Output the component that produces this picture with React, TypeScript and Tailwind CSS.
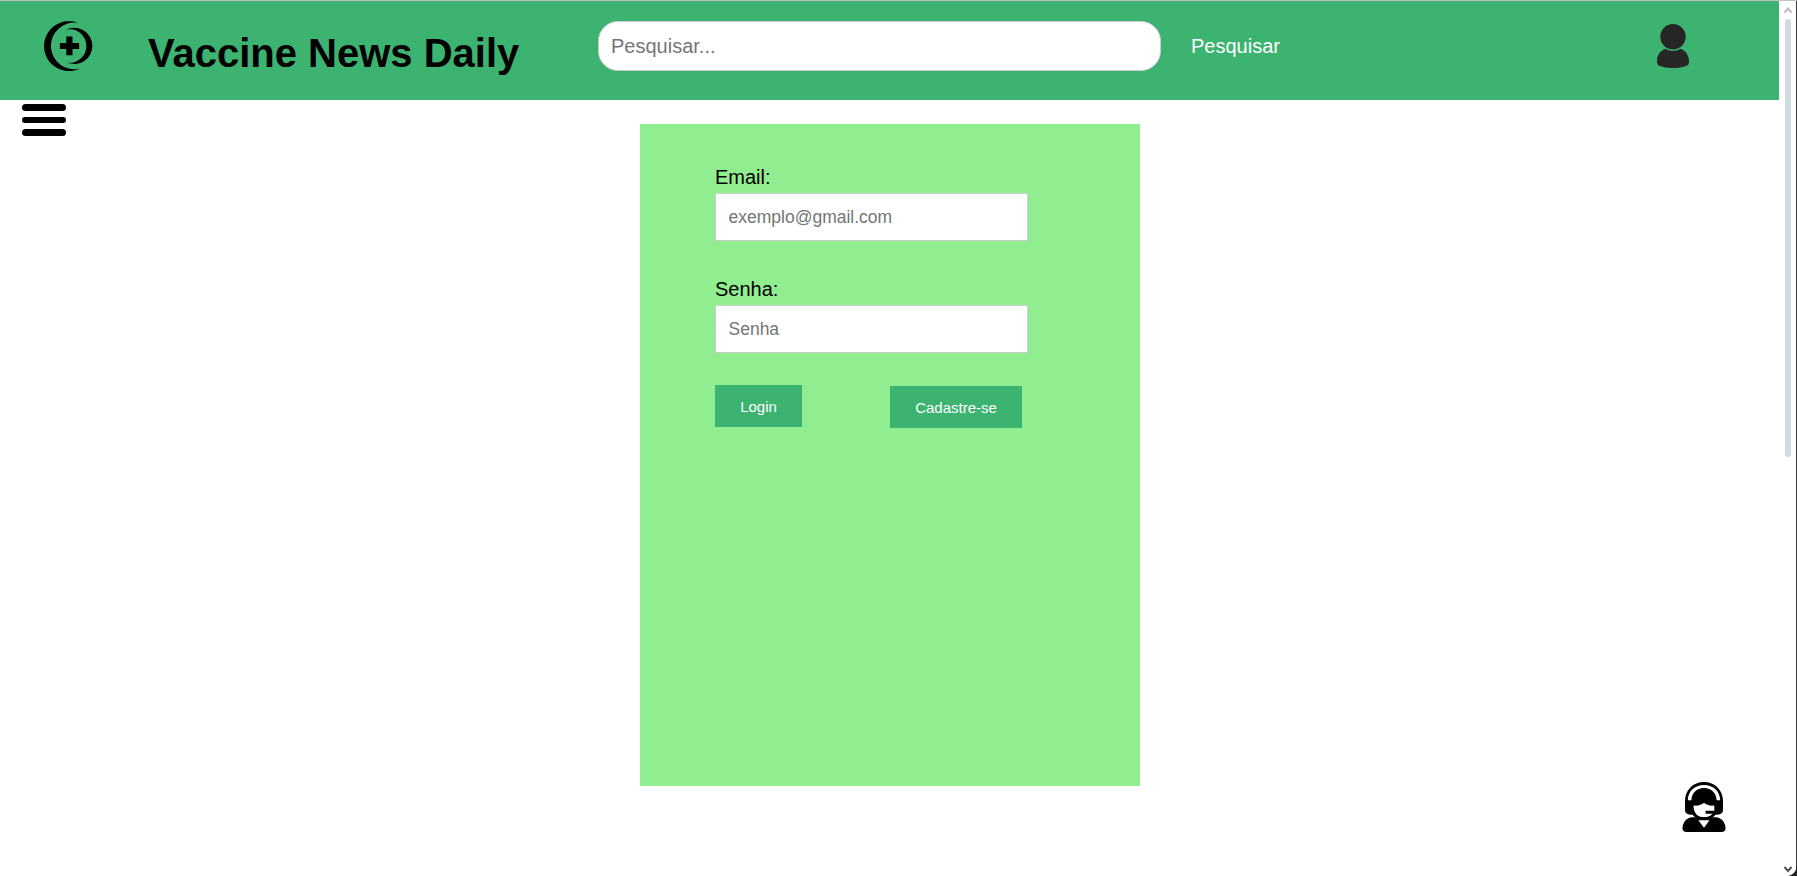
import React from "react";

function LogoIcon() {
  return (
    <svg className="h-[50px] w-[49px] shrink-0" viewBox="0 0 49 50" aria-label="Vaccine News Daily">
      <path d="M34 1.800A25 25 0 1 0 36 47.600A23.400 23.400 0 1 1 34 1.800Z" />
      <path d="M22 8.600A18.200 18.200 0 1 1 23 41.600A16.800 16.800 0 1 0 22 8.600Z" />
      <path d="M22.300 15.500h6.200v6.400h6.600v6.200h-6.600v6.200h-6.200v-6.200H15.900v-6.200h6.400Z" />
    </svg>
  );
}

function UserIcon() {
  return (
    <svg className="h-[44px] w-[32px] shrink-0 fill-[#262626]" viewBox="0 0 32 44">
      <ellipse cx="16" cy="12.700" rx="12.700" ry="12.700" />
      <path d="M8.500 24.800C13 27.800 19 27.800 23.500 24.800C28.800 26.800 32 31.500 32 37.500C32 38.500 31.900 39.500 31.500 40.200C29.500 42.800 23 44 16 44S2.500 42.800 .5 40.200C.1 39.500 0 38.500 0 37.500C0 31.500 3.200 26.800 8.500 24.800Z" />
    </svg>
  );
}

function SupportIcon() {
  return (
    <svg className="h-[50px] w-[44px]" viewBox="0 0 44 50">
      <path d="M3 19C3 8 11 0 22 0s19 8 19 19v9c0 3.500-3 4.700-7.500 4.700C31 36 27 37.500 22 37.500S13 36 10.500 32.700C6 32.700 3 31.500 3 28Z" />
      <path d="M5.800 18.200C6 9.300 12.500 2.900 22 2.900s16 6.400 16.200 15.300h-3.600C34.300 11 29.500 6 22 6S9.700 11 9.400 18.200Z" fill="white" />
      <path d="M11.500 23.500C16 24 19.500 23 22 20.800C24.500 23 28 24 32.300 23.500V28.800H23.600v2.900h6.900C28.700 34 26 35.200 22 35.200C15.500 35.200 11.500 31 11.500 23.500Z" fill="white" />
      <path d="M10 35.300h24c5 0 9.500 5 9.500 11c0 2.500-1.500 3.700-4 3.700h-35C2 50 .5 48.800 .5 46.300C.5 40.300 5 35.300 10 35.300Z" />
      <path d="M16.300 38.300h11.200L22 45.800Z" fill="white" />
    </svg>
  );
}

function Header() {
  return (
    <header className="flex h-[99px] shrink-0 items-start bg-[#3cb371] pt-5">
      <div className="ml-[43.5px]">
        <LogoIcon />
      </div>
      <h1 className="mt-[9px] ml-[55.5px] w-[450px] text-[40px] leading-[46px] font-bold whitespace-nowrap">Vaccine News Daily</h1>
      <input
        className="h-[50px] w-[563px] rounded-[20px] border border-[#ccc] bg-white px-[12px] text-[20px] placeholder-[#757575] outline-none"
        placeholder="Pesquisar..."
      />
      <button className="ml-[30px] h-[50px] text-[20px] text-white">Pesquisar</button>
      <div className="mt-[3px] mr-[90px] ml-auto">
        <UserIcon />
      </div>
    </header>
  );
}

function MenuButton() {
  return (
    <button className="mt-1 ml-[22px] flex w-11 flex-col gap-[6px]" aria-label="Menu">
      <span className="h-[6.5px] w-full rounded-full bg-black" />
      <span className="h-[6.5px] w-full rounded-full bg-black" />
      <span className="h-[6.5px] w-full rounded-full bg-black" />
    </button>
  );
}

function Field({ label, placeholder, type }: { label: string; placeholder: string; type: string }) {
  return (
    <label className="flex flex-col text-[20px] leading-[23px]">
      {label}
      <input
        type={type}
        placeholder={placeholder}
        className="mt-[4px] h-[48px] w-[313px] border border-[#ccc] bg-white px-[12.5px] text-[17.5px] placeholder-[#757575] outline-none"
      />
    </label>
  );
}

function LoginForm() {
  return (
    <form className="h-[662px] w-[500px] bg-[#90ee90] pt-[42px] pl-[75px]">
      <div className="flex flex-col gap-[37px]">
        <Field label="Email:" placeholder="exemplo@gmail.com" type="email" />
        <Field label="Senha:" placeholder="Senha" type="password" />
      </div>
      <div className="mt-[32px] flex items-start gap-[88px]">
        <button type="button" className="h-[42px] w-[87px] bg-[#3cb371] pt-[2px] text-[15px] text-white">Login</button>
        <button type="button" className="mt-px h-[42px] w-[132px] bg-[#3cb371] pt-[2px] text-[15px] text-white">Cadastre-se</button>
      </div>
    </form>
  );
}

function Scrollbar() {
  return (
    <div className="flex w-[17px] shrink-0 flex-col items-center bg-white pt-[6px] pb-[3px]">
      <svg className="h-[7px] w-[8px]" viewBox="0 0 8 7" fill="none" stroke="#bbb" strokeWidth="2">
        <path d="M.5 5.500L4 1.500L7.500 5.500" />
      </svg>
      <div className="mt-[5px] h-[438px] w-[6px] rounded-full bg-[#d1dbe3]" />
      <svg className="mt-auto h-[7px] w-[8px]" viewBox="0 0 8 7" fill="none" stroke="#505050" strokeWidth="2">
        <path d="M.5 1L4 5L7.500 1" />
      </svg>
    </div>
  );
}

export default function App() {
  return (
    <div className="flex h-[876px] w-[1797px] flex-col overflow-hidden border-t border-[#c0c0c0] bg-white font-['Liberation_Sans',Arial,sans-serif] text-black">
      <div className="flex min-h-0 flex-1">
        <div className="relative flex w-[1779px] shrink-0 flex-col">
          <Header />
          <div className="flex items-start">
            <MenuButton />
            <main className="mt-6 ml-[574px]">
              <LoginForm />
            </main>
          </div>
          <div className="absolute right-[53px] bottom-[44px]">
            <SupportIcon />
          </div>
        </div>
        <Scrollbar />
        <div className="relative w-px bg-[#3a3a3a]">
          <svg className="absolute right-0 bottom-0 h-[10px] w-[9px]" viewBox="0 0 9 10">
            <path d="M9 0C8.500 5 5 9 0 10H9Z" fill="#222" />
          </svg>
        </div>
      </div>
    </div>
  );
}
